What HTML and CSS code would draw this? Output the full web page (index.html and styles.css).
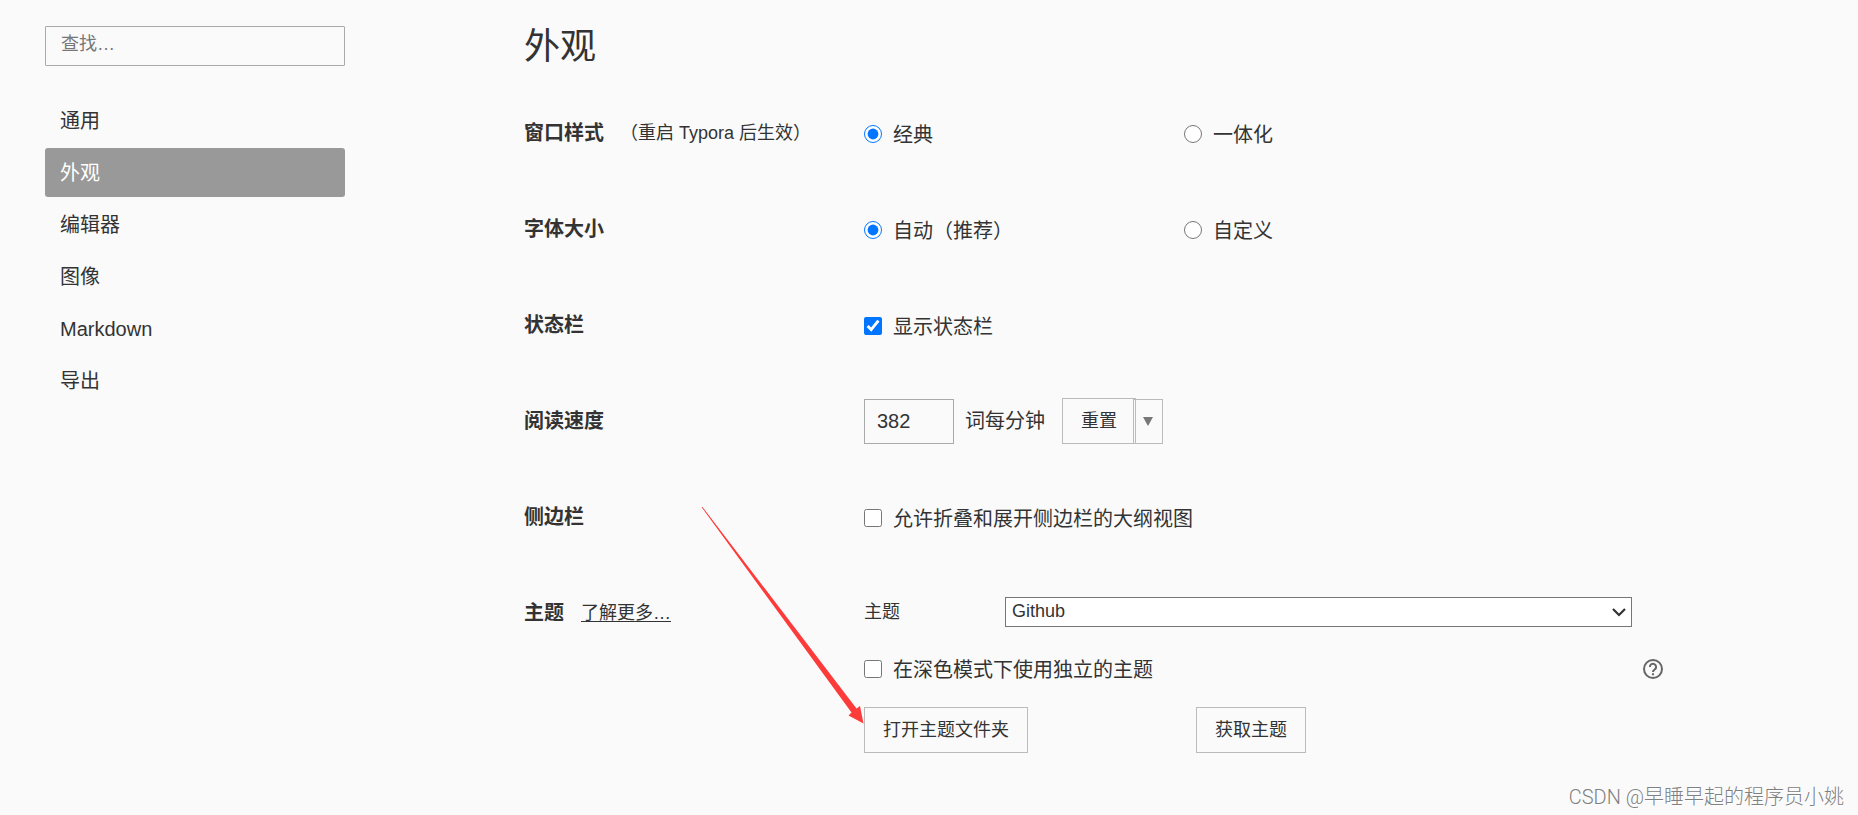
FILE: index.html
```html
<!DOCTYPE html>
<html lang="zh-CN">
<head>
<meta charset="utf-8">
<title>外观</title>
<link rel="stylesheet" href="styles.css">
</head>
<body>
<div class="page">
  <aside class="sidebar">
    <input class="search" type="text" placeholder="查找…" aria-label="查找">
    <nav class="nav">
      <a class="nav-item" href="#general">通用</a>
      <a class="nav-item active" href="#appearance" aria-current="page">外观</a>
      <a class="nav-item" href="#editor">编辑器</a>
      <a class="nav-item" href="#image">图像</a>
      <a class="nav-item" href="#markdown">Markdown</a>
      <a class="nav-item" href="#export">导出</a>
    </nav>
  </aside>

  <main class="main">
    <h1 class="title">外观</h1>

    <section class="row">
      <div class="row-label"><strong>窗口样式</strong><span class="note">（重启 Typora 后生效）</span></div>
      <div class="controls choices">
        <label class="choice"><input type="radio" name="window" checked>经典</label>
        <label class="choice"><input type="radio" name="window">一体化</label>
      </div>
    </section>

    <section class="row">
      <div class="row-label"><strong>字体大小</strong></div>
      <div class="controls choices">
        <label class="choice"><input type="radio" name="size" checked>自动（推荐）</label>
        <label class="choice"><input type="radio" name="size">自定义</label>
      </div>
    </section>

    <section class="row">
      <div class="row-label"><strong>状态栏</strong></div>
      <div class="controls">
        <label class="choice"><input type="checkbox" checked>显示状态栏</label>
      </div>
    </section>

    <section class="row">
      <div class="row-label"><strong>阅读速度</strong></div>
      <div class="controls speed">
        <input class="number" id="speed" type="number" value="382">
        <label class="unit" for="speed">词每分钟</label>
        <div class="split">
          <button class="button" type="button">重置</button>
          <button class="button caret" type="button" aria-label="更多选项">
            <svg width="10" height="9" viewBox="0 0 10 9" aria-hidden="true"><path d="M0 0h10L5 9z" fill="#777"/></svg>
          </button>
        </div>
      </div>
    </section>

    <section class="row">
      <div class="row-label"><strong>侧边栏</strong></div>
      <div class="controls">
        <label class="choice"><input type="checkbox">允许折叠和展开侧边栏的大纲视图</label>
      </div>
    </section>

    <section class="row theme-row">
      <div class="row-label"><strong>主题</strong><a class="more" href="#themes">了解更多…</a></div>
      <div class="theme">
        <div class="theme-pick">
          <label class="theme-label" for="theme">主题</label>
          <div class="select-box">
            <select class="select" id="theme"><option>Github</option></select>
            <svg class="chevron" width="14" height="9" viewBox="0 0 14 9" fill="none" stroke="#333" stroke-width="2.2" aria-hidden="true"><path d="M1 1l6 6 6-6"/></svg>
          </div>
        </div>
        <div class="theme-dark">
          <label class="choice"><input type="checkbox">在深色模式下使用独立的主题</label>
          <button class="help" type="button" aria-label="帮助">
            <svg width="20" height="20" viewBox="0 0 20 20" fill="none" stroke="#666" aria-hidden="true">
              <circle cx="10" cy="10" r="9" stroke-width="2"/>
              <path d="M6.900 8a3.100 3.100 0 1 1 5 2.300C10.700 11.200 10 11.600 10 13.100" stroke-width="2"/>
              <path d="M10 14.200v2" stroke-width="2"/>
            </svg>
          </button>
        </div>
        <div class="theme-actions">
          <div><button class="button" type="button">打开主题文件夹</button></div>
          <div><button class="button" type="button">获取主题</button></div>
        </div>
      </div>
    </section>
  </main>

  <svg class="arrow" width="164" height="220" viewBox="0 0 164 220" aria-hidden="true">
    <path d="M1.500 2L2.500 2 156.500 203.500 160 201 163.500 218.500 148.500 210.500 151.500 207.500z" fill="#fd3b3a"/>
  </svg>
  <div class="watermark">CSDN @早睡早起的程序员小姚</div>
</div>
</body>
</html>
```

FILE: styles.css
```css
* {
  box-sizing: border-box;
}

body {
  margin: 0;
  background: #fafafa;
  color: #333;
  font-family: "Liberation Sans", "Noto Sans CJK SC", sans-serif;
  font-size: 20px;
  line-height: 28px;
}

button,
input,
select {
  margin: 0;
  font: inherit;
  color: inherit;
}

.page {
  position: relative;
  display: grid;
  grid-template-columns: 300px minmax(0, 1fr);
  column-gap: 179px;
  min-height: 100vh;
  padding: 0 195px 0 45px;
}

.sidebar {
  padding-top: 26px;
}

.search {
  display: block;
  width: 100%;
  height: 40px;
  padding: 0 15px 3px;
  border: 1px solid #aaa;
  border-radius: 1px;
  background: transparent;
  font-size: 18px;
}

.search::placeholder {
  color: #777;
}

.nav {
  display: flex;
  flex-direction: column;
  gap: 3px;
  margin-top: 30px;
}

.nav-item {
  padding: 11px 15px 10px;
  border-radius: 3px;
  color: inherit;
  text-decoration: none;
}

.nav-item.active {
  background: #999;
  color: #fff;
}

.title {
  margin: 0;
  padding: 23px 0 13px;
  font-size: 36px;
  font-weight: 400;
  line-height: 48px;
}

.row {
  display: grid;
  grid-template-columns: 340px minmax(0, 1fr);
  align-items: center;
  min-height: 96px;
}

.row-label {
  display: flex;
  align-items: center;
  min-height: 96px;
  padding-top: 2px;
  white-space: nowrap;
}

.note {
  margin-left: 16px;
  font-size: 18px;
}

.more {
  margin-left: 17px;
  color: inherit;
  font-size: 18px;
  text-underline-offset: 2px;
}

.controls {
  padding-top: 4px;
}

.choices {
  display: grid;
  grid-template-columns: 320px 1fr;
}

.choice {
  display: flex;
  align-items: center;
  gap: 11px;
  padding-top: 2px;
}

.choice input {
  width: 18px;
  height: 18px;
  margin-bottom: 2px;
  accent-color: #0075ff;
}

.speed {
  display: flex;
  align-items: center;
  padding-top: 2px;
}

.number {
  width: 90px;
  height: 45px;
  padding: 0 12px;
  border: 1px solid #aaa;
  background: transparent;
  appearance: textfield;
}

.unit {
  margin: 0 17px 0 11px;
}

.split {
  display: flex;
  align-items: flex-end;
}

.button {
  height: 46px;
  padding: 0 18px;
  border: 1px solid #bbb;
  background: transparent;
  font-size: 18px;
}

.caret {
  display: flex;
  align-items: center;
  height: 45px;
  margin-left: -3px;
  padding: 0 9px;
}

.theme-row {
  align-items: start;
}

.theme {
  padding-top: 33px;
}

.theme-pick {
  display: flex;
  align-items: center;
  height: 30px;
  padding-right: 31px;
}

.theme-label {
  width: 141px;
  font-size: 18px;
}

.select-box {
  position: relative;
  display: flex;
  flex: 1;
}

.select {
  width: 100%;
  height: 30px;
  padding: 0 6px 3px;
  border: 1px solid #767676;
  border-radius: 0;
  background: #fff;
  font-size: 18px;
  line-height: 24px;
  appearance: none;
}

.chevron {
  position: absolute;
  top: 11px;
  right: 6px;
  pointer-events: none;
}

.theme-dark {
  display: flex;
  align-items: center;
  justify-content: space-between;
  margin: 27px 0 23px;
}

.help {
  display: flex;
  padding: 0;
  border: 0;
  background: none;
}

.theme-actions {
  display: grid;
  grid-template-columns: 332px 1fr;
}

.arrow {
  position: absolute;
  top: 505px;
  left: 700px;
  pointer-events: none;
}

.watermark {
  position: absolute;
  right: 14px;
  bottom: 4px;
  color: #808080;
  font-family: Roboto, "Noto Sans CJK SC", sans-serif;
  font-weight: 300;
  text-shadow: 1px 1px 0 #fff;
}
```
